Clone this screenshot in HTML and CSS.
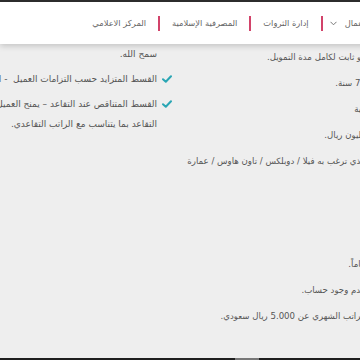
FILE: index.html
```html
<!DOCTYPE html>
<html lang="ar">
<head>
<meta charset="utf-8">
<title>التمويل العقاري</title>
<link rel="stylesheet" href="styles.css">
</head>
<body>
<div class="topline"></div>
<header class="header">
  <nav class="nav">
    <span class="nav-item">الأعمال</span>
    <svg class="chev" width="7" height="5" viewBox="0 0 7 5"><polyline points="0.5,0.8 3.5,3.8 6.5,0.8" fill="none" stroke="#777" stroke-width="1"/></svg>
    <span class="sep"></span>
    <span class="nav-item">إدارة الثروات</span>
    <span class="sep"></span>
    <span class="nav-item">المصرفية الإسلامية</span>
    <span class="sep"></span>
    <span class="nav-item">المركز الاعلامي</span>
  </nav>
</header>
<main class="content">
  <section class="col-right">
    <p class="line">هو ثابت لكامل مدة التمويل.</p>
    <p class="line">75 سنة.</p>
    <p class="line">مية</p>
    <p class="line">مليون ريال.</p>
    <p class="line">الذي ترغب به فيلا / دوبلكس / تاون هاوس / عمارة</p>
    <div class="group">
      <p class="line">عاماً.</p>
      <p class="line">عدم وجود حساب.</p>
      <p class="line">الراتب الشهري عن 5.000 ريال سعودي.</p>
    </div>
  </section>
  <section class="col-left">
    <p class="cont">سمح الله.</p>
    <ul class="checks">
      <li class="check-item"><svg class="tick" width="10" height="8" viewBox="0 0 10 8"><polyline points="1,4.2 3.8,6.8 9,1.2" fill="none" stroke="#2aa6b4" stroke-width="2" stroke-linecap="round" stroke-linejoin="round"/></svg><span>القسط المتزايد حسب التزامات العميل &nbsp;- التمويل بأقساط متزايدة حسب الدخل</span></li>
      <li class="check-item"><svg class="tick" width="10" height="8" viewBox="0 0 10 8"><polyline points="1,4.2 3.8,6.8 9,1.2" fill="none" stroke="#2aa6b4" stroke-width="2" stroke-linecap="round" stroke-linejoin="round"/></svg><span>القسط المتناقص عند التقاعد – يمنح العميل مرونة في خفض القسط بعد<br>التقاعد بما يتناسب مع الراتب التقاعدي.</span></li>
    </ul>
  </section>
</main>
<div class="bottombar"><span class="thumb"></span></div>
</body>
</html>
```
FILE: styles.css
```css
html, body {
  margin: 0;
  padding: 0;
  height: 360px;
  overflow: hidden;
  background: #eeeeee;
  font-family: "DejaVu Sans", sans-serif;
  color: #555;
}
.topline {
  height: 2px;
  background: #2e2e2e;
}
.header {
  position: relative;
  z-index: 2;
  height: 42px;
  background: #ffffff;
  box-shadow: 0 2px 6px rgba(0, 0, 0, 0.18);
  display: flex;
  margin-right: -10px;
}
.nav {
  direction: rtl;
  display: flex;
  align-items: center;
  gap: 12px;
  flex: 1;
  white-space: nowrap;
}
.nav-item {
  font-size: 8.3px;
  color: #666;
}
.chev { margin-right: -4px; margin-left: -5px; margin-top: 1px; }
.sep {
  width: 2px;
  height: 15px;
  background: #d2436a;
}
.content {
  direction: rtl;
  display: flex;
  margin-right: -6px;
  font-size: 9px;
  color: #555;
}
.col-right {
  flex: none;
  width: 181px;
  white-space: nowrap;
  font-size: 8.6px;
}
.line {
  margin: 0;
  line-height: 26px;
}
.group {
  margin-top: 77px;
}
.col-left {
  flex: none;
  width: 420px;
  padding-right: 28px;
  white-space: nowrap;
}
.cont {
  margin: 0;
  line-height: 20px;
}
.checks {
  list-style: none;
  margin: 0;
  padding: 0;
}
.check-item {
  position: relative;
  margin-top: 5px;
  line-height: 20px;
}
.tick {
  position: absolute;
  right: -15px;
  top: 6px;
}
.bottombar {
  position: fixed;
  left: 0;
  right: 0;
  bottom: 0;
  height: 2px;
  background: #1e1e1e;
}
.thumb {
  position: absolute;
  left: 235px;
  top: 0;
  width: 24px;
  height: 2px;
  background: #777;
}
```
